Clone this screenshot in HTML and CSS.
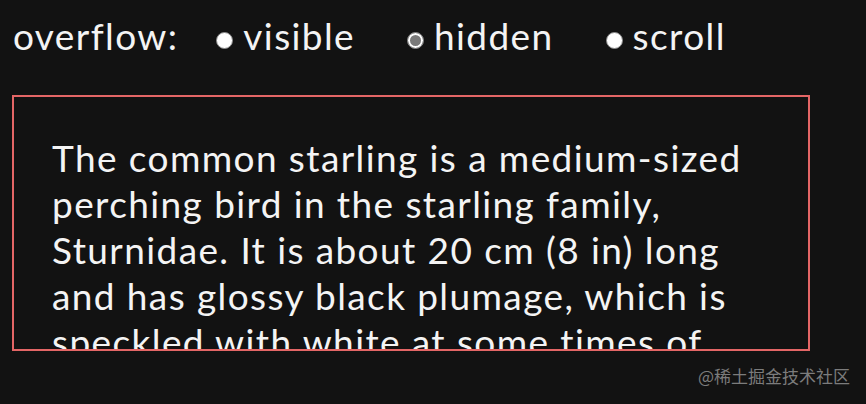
FILE: index.html
```html
<!DOCTYPE html>
<html lang="en">
<head>
  <meta charset="UTF-8">
  <title>overflow</title>
  <meta name="viewport" content="width=device-width, initial-scale=1.0">
  <link rel="stylesheet" href="styles.css">
</head>
<body>
  <div class="options">
    <span class="options-title">overflow:</span>
    <label class="option"><input type="radio" name="ov" value="visible"><span>visible</span></label>
    <label class="option"><input type="radio" name="ov" value="hidden" checked><span>hidden</span></label>
    <label class="option"><input type="radio" name="ov" value="scroll"><span>scroll</span></label>
  </div>

  <div class="bird-box" id="bird-box">
    <p>The common starling is a medium-sized perching bird in the starling family, Sturnidae. It is about 20 cm (8 in) long and has glossy black plumage, which is speckled with white at some times of year. The legs are pink and the bill is black in winter and yellow in summer.</p>
  </div>

  <div class="watermark">@稀土掘金技术社区</div>
</body>
</html>
```

FILE: styles.css
```css
html, body {
  margin: 0; padding: 0;
  width: 100vw; height: 100vh;
  background: #121212;
  color: #f4f4f4;
  font-family: Lato, 'Noto Sans', sans-serif;
  overflow: hidden;
}
.options {
  display: flex;
  align-items: flex-start;
  padding: 13px 0 0 13px;
  font-size: 37px;
  line-height: 46px;
  letter-spacing: 1.4px;
}
.options-title {
  margin-right: 38px;
}
.option {
  display: flex;
  align-items: flex-start;
  margin-right: 52px;
  cursor: pointer;
}
.option input {
  appearance: none;
  -webkit-appearance: none;
  width: 17px; height: 17px;
  margin: 19px 10px 0 0;
  border-radius: 50%;
  background: #fff;
  border: 1px solid #8a8a8a;
  box-sizing: border-box;
}
.option input:checked {
  background: #7a7a7a;
  box-shadow: inset 0 0 0 2px #fff;
}
.bird-box {
  margin: 36px 0 0 12px;
  width: 798px;
  height: 256px;
  box-sizing: border-box;
  border: 2px solid #e46666;
  padding: 38px 46px 0 38px;
  overflow: hidden;
}
.bird-box p {
  margin: 0;
  font-size: 37px;
  line-height: 46px;
  letter-spacing: 1.4px;
}
.watermark {
  position: absolute;
  right: 16px; bottom: 16px;
  color: #7c7c7c;
  font-family: 'Noto Sans CJK SC', sans-serif;
  font-size: 17px;
  white-space: nowrap;
}
```
